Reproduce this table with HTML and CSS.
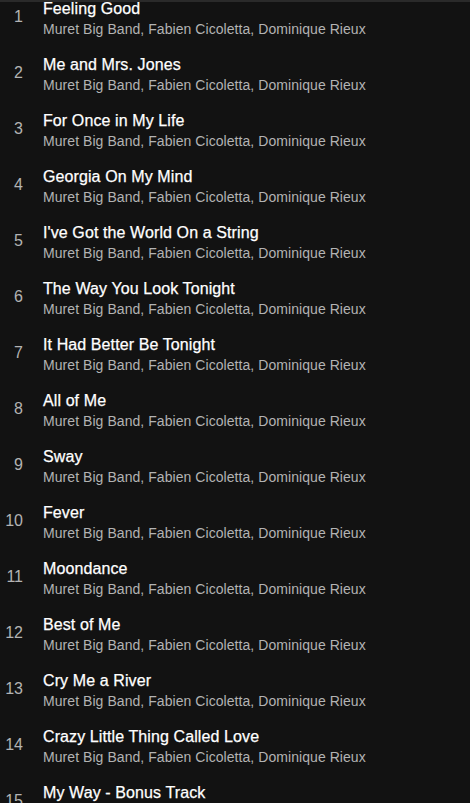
FILE: index.html
```html
<!DOCTYPE html>
<html>
<head>
<meta charset="utf-8">
<link rel="stylesheet" href="styles.css">
</head>
<body>
<div class="topline"></div>
<ol class="tracks">
  <li class="track"><span class="num">1</span><div class="info"><div class="title">Feeling Good</div><div class="artist">Muret Big Band, Fabien Cicoletta, Dominique Rieux</div></div></li>
  <li class="track"><span class="num">2</span><div class="info"><div class="title">Me and Mrs. Jones</div><div class="artist">Muret Big Band, Fabien Cicoletta, Dominique Rieux</div></div></li>
  <li class="track"><span class="num">3</span><div class="info"><div class="title">For Once in My Life</div><div class="artist">Muret Big Band, Fabien Cicoletta, Dominique Rieux</div></div></li>
  <li class="track"><span class="num">4</span><div class="info"><div class="title">Georgia On My Mind</div><div class="artist">Muret Big Band, Fabien Cicoletta, Dominique Rieux</div></div></li>
  <li class="track"><span class="num">5</span><div class="info"><div class="title">I've Got the World On a String</div><div class="artist">Muret Big Band, Fabien Cicoletta, Dominique Rieux</div></div></li>
  <li class="track"><span class="num">6</span><div class="info"><div class="title">The Way You Look Tonight</div><div class="artist">Muret Big Band, Fabien Cicoletta, Dominique Rieux</div></div></li>
  <li class="track"><span class="num">7</span><div class="info"><div class="title">It Had Better Be Tonight</div><div class="artist">Muret Big Band, Fabien Cicoletta, Dominique Rieux</div></div></li>
  <li class="track"><span class="num">8</span><div class="info"><div class="title">All of Me</div><div class="artist">Muret Big Band, Fabien Cicoletta, Dominique Rieux</div></div></li>
  <li class="track"><span class="num">9</span><div class="info"><div class="title">Sway</div><div class="artist">Muret Big Band, Fabien Cicoletta, Dominique Rieux</div></div></li>
  <li class="track"><span class="num">10</span><div class="info"><div class="title">Fever</div><div class="artist">Muret Big Band, Fabien Cicoletta, Dominique Rieux</div></div></li>
  <li class="track"><span class="num">11</span><div class="info"><div class="title">Moondance</div><div class="artist">Muret Big Band, Fabien Cicoletta, Dominique Rieux</div></div></li>
  <li class="track"><span class="num">12</span><div class="info"><div class="title">Best of Me</div><div class="artist">Muret Big Band, Fabien Cicoletta, Dominique Rieux</div></div></li>
  <li class="track"><span class="num">13</span><div class="info"><div class="title">Cry Me a River</div><div class="artist">Muret Big Band, Fabien Cicoletta, Dominique Rieux</div></div></li>
  <li class="track"><span class="num">14</span><div class="info"><div class="title">Crazy Little Thing Called Love</div><div class="artist">Muret Big Band, Fabien Cicoletta, Dominique Rieux</div></div></li>
  <li class="track"><span class="num">15</span><div class="info"><div class="title">My Way - Bonus Track</div><div class="artist">Muret Big Band, Fabien Cicoletta, Dominique Rieux</div></div></li>
</ol>
</body>
</html>
```
FILE: styles.css
```css
html, body {
  margin: 0;
  padding: 0;
  background: #121212;
  height: 100%;
  overflow: hidden;
}
body {
  font-family: "Liberation Sans", Arial, sans-serif;
  position: relative;
}
.topline {
  position: absolute;
  top: 0;
  left: 0;
  right: 0;
  height: 2px;
  background: #2a2a2a;
  z-index: 2;
}
.tracks {
  list-style: none;
  margin: -9px 0 0 0;
  padding: 0;
}
.track {
  display: grid;
  grid-template-columns: 23px 1fr;
  column-gap: 20px;
  height: 56px;
  padding: 8px 0;
  box-sizing: border-box;
}
.num {
  color: #b3b3b3;
  font-size: 16px;
  line-height: 20px;
  text-align: right;
  padding-top: 8px;
}
.info {
  display: flex;
  flex-direction: column;
  min-width: 0;
}
.title {
  color: #ffffff;
  font-size: 16px;
  line-height: 20px;
  letter-spacing: 0.1px;
  -webkit-text-stroke: 0.25px #ffffff;
  white-space: nowrap;
}
.artist {
  color: #b3b3b3;
  font-size: 14px;
  line-height: 20px;
  letter-spacing: 0.06px;
  white-space: nowrap;
}
```
